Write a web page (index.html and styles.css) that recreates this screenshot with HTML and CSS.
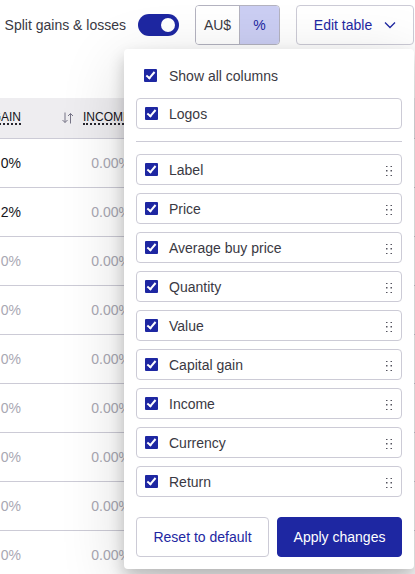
FILE: index.html
```html
<!DOCTYPE html>
<html lang="en">
<head>
    <meta charset="UTF-8">
    <meta name="viewport" content="width=device-width, initial-scale=1.0">
    <title>Portfolio Table</title>
    <link rel="stylesheet" href="styles.css">
</head>
<body>
    <div class="toolbar">
        <label class="split-toggle">
            <span>Split gains &amp; losses</span>
            <input type="checkbox" class="switch" checked>
        </label>

        <div class="unit-group">
            <button type="button" class="unit">AU$</button>
            <button type="button" class="unit active">%</button>
        </div>

        <div class="edit-menu">
            <button type="button" class="button edit-button">
                Edit table
                <svg class="chevron" viewBox="0 0 12 8" aria-hidden="true"><path d="M1 1.5 6 6.5 11 1.5"/></svg>
            </button>

            <form class="columns-panel">
                <label class="show-all">
                    <input type="checkbox" class="tick" checked>
                    <span>Show all columns</span>
                </label>
                <label class="column-item">
                    <input type="checkbox" class="tick" checked>
                    <span>Logos</span>
                </label>
                <hr>
                <div class="column-list" id="column-list"></div>
                <div class="panel-footer">
                    <button type="reset" class="button">Reset to default</button>
                    <button type="button" class="button primary">Apply changes</button>
                </div>
            </form>
        </div>
    </div>

    <div class="table-wrap">
        <table>
            <thead>
                <tr>
                    <th class="gain"><abbr>GAIN</abbr></th>
                    <th class="income">
                        <svg class="sort" viewBox="0 0 11 12" aria-hidden="true"><path d="M3 .5v10M.5 8 3 10.5 5.5 8M8.500 11.5v-10M6 4 8.500 1.500 11 4"/></svg>
                        <abbr>INCOME</abbr>
                    </th>
                    <th></th>
                </tr>
            </thead>
            <tbody>
                <tr><td class="filled">0%</td><td>0.00%</td><td></td></tr>
                <tr><td class="filled">2%</td><td>0.00%</td><td></td></tr>
                <tr><td>0%</td><td>0.00%</td><td></td></tr>
                <tr><td>0%</td><td>0.00%</td><td></td></tr>
                <tr><td>0%</td><td>0.00%</td><td></td></tr>
                <tr><td>0%</td><td>0.00%</td><td></td></tr>
                <tr><td>0%</td><td>0.00%</td><td></td></tr>
                <tr><td>0%</td><td>0.00%</td><td></td></tr>
                <tr><td>0%</td><td>0.00%</td><td></td></tr>
            </tbody>
        </table>
    </div>

    <script src="script.js"></script>
</body>
</html>
```
FILE: styles.css
```css
html {
    overflow: hidden;
}

body {
    margin: 0;
    font-family: 'Liberation Sans', Arial, sans-serif;
    font-size: 14px;
    line-height: 20px;
    color: #3a3943;
    background: #fff;
}

button {
    font: inherit;
    cursor: pointer;
}

input {
    appearance: none;
    margin: 0;
    flex: none;
    cursor: pointer;
}

/* Toolbar */
.toolbar {
    display: flex;
    justify-content: flex-end;
    gap: 16px;
    padding: 5px 1px 0 0;
    margin-bottom: 53px;
    white-space: nowrap;
}

.split-toggle {
    display: flex;
    align-items: center;
    gap: 12px;
}

.switch {
    width: 41px;
    height: 22px;
    border-radius: 11px;
    background: #1e27a2;
}

.switch::before {
    content: '';
    display: block;
    width: 14px;
    height: 14px;
    margin: 4px 4px 4px 23px;
    border-radius: 50%;
    background: #fff;
}

.unit-group {
    display: flex;
    border: 1px solid #b4b3c0;
    border-radius: 4px;
    overflow: hidden;
}

.unit {
    box-sizing: border-box;
    width: 43px;
    height: 38px;
    padding: 0;
    border: none;
    background: #fff;
    color: #3a3943;
}

.unit.active {
    width: 40px;
    border-left: 1px solid #b4b3c0;
    background: #cbcef3;
    color: #1e27a2;
}

.button {
    box-sizing: border-box;
    height: 40px;
    padding: 0 15px;
    border: 1px solid #cccbd6;
    border-radius: 4px;
    background: #fff;
    color: #1e27a2;
}

.button.primary {
    border-color: #1e27a2;
    background: #1e27a2;
    color: #fff;
}

.edit-menu {
    position: relative;
}

.edit-button {
    display: flex;
    align-items: center;
    justify-content: center;
    gap: 12px;
    width: 118px;
}

.chevron {
    width: 12px;
    height: 8px;
}

.chevron path,
.sort path {
    fill: none;
    stroke: currentColor;
}

.chevron path {
    stroke-width: 1.3;
}

/* Columns panel */
.columns-panel {
    position: absolute;
    top: 44px;
    right: 0;
    box-sizing: border-box;
    width: 290px;
    padding: 12px;
    border-radius: 4px;
    background: #fff;
    box-shadow: 0 8px 16px rgba(0, 0, 0, 0.2), 0 16px 64px rgba(0, 0, 0, 0.16);
}

.show-all,
.column-item {
    display: flex;
    align-items: center;
    padding: 0 9px 0 8px;
}

.show-all {
    gap: 12px;
    height: 29px;
    margin-bottom: 8px;
}

.column-item {
    box-sizing: border-box;
    gap: 11px;
    height: 31px;
    border: 1px solid #cccbd6;
    border-radius: 4px;
}

.column-item span {
    flex: 1;
}

.tick {
    width: 13px;
    height: 13px;
    border-radius: 1px;
    background: #1e27a2;
}

.tick::before {
    content: '';
    display: block;
    box-sizing: border-box;
    width: 5px;
    height: 9px;
    margin: 1px 4px;
    border: solid #fff;
    border-width: 0 2px 2px 0;
    transform: rotate(40deg);
}

.tick:not(:checked),
.switch:not(:checked) {
    background: #b4b3c0;
}

hr {
    margin: 12px 0;
    border: none;
    border-top: 1px solid #cccbd6;
}

.column-list {
    display: flex;
    flex-direction: column;
    gap: 8px;
}

.handle {
    width: 6px;
    height: 10px;
    margin-top: 3px;
    fill: #55545f;
}

.panel-footer {
    display: grid;
    grid-template-columns: 133fr 125fr;
    gap: 8px;
    margin-top: 20px;
}

.panel-footer .button {
    padding: 0;
}

/* Holdings table */
.table-wrap {
    margin-left: -12px;
}

table {
    width: 100%;
    table-layout: fixed;
    border-collapse: separate;
    border-spacing: 0;
}

th,
td {
    box-sizing: border-box;
    padding: 0;
    border-bottom: 1px solid #cccbd6;
    text-align: right;
}

th {
    height: 41px;
    background: #eeedf0;
    color: #15141a;
    font-size: 12px;
    font-weight: normal;
    line-height: 12px;
    white-space: nowrap;
}

th.gain {
    width: 33px;
}

th.income {
    width: 110px;
}

th abbr {
    display: inline-block;
    border-bottom: 2px dotted #26252d;
}

.sort {
    width: 11px;
    height: 12px;
    margin-right: 7px;
    color: #777587;
    vertical-align: middle;
}

td {
    height: 49px;
    color: #a9a8b3;
}

td.filled {
    color: #15141a;
}
```
FILE: script.js
```js
const columns = ['Label', 'Price', 'Average buy price', 'Quantity', 'Value', 'Capital gain', 'Income', 'Currency', 'Return'];

document.getElementById('column-list').innerHTML = columns.map(name => `
    <label class="column-item" draggable="true">
        <input type="checkbox" class="tick" checked>
        <span>${name}</span>
        <svg class="handle" viewBox="0 0 6 10" aria-hidden="true">
            <path d="M0 0h1.500v1H0zM4.500 0H6v1H4.500zM0 4h1.500v1.500H0zM4.500 4H6v1.500H4.500zM0 9h1.500v1H0zM4.500 9H6v1H4.500z"/>
        </svg>
    </label>
`).join('');
```
